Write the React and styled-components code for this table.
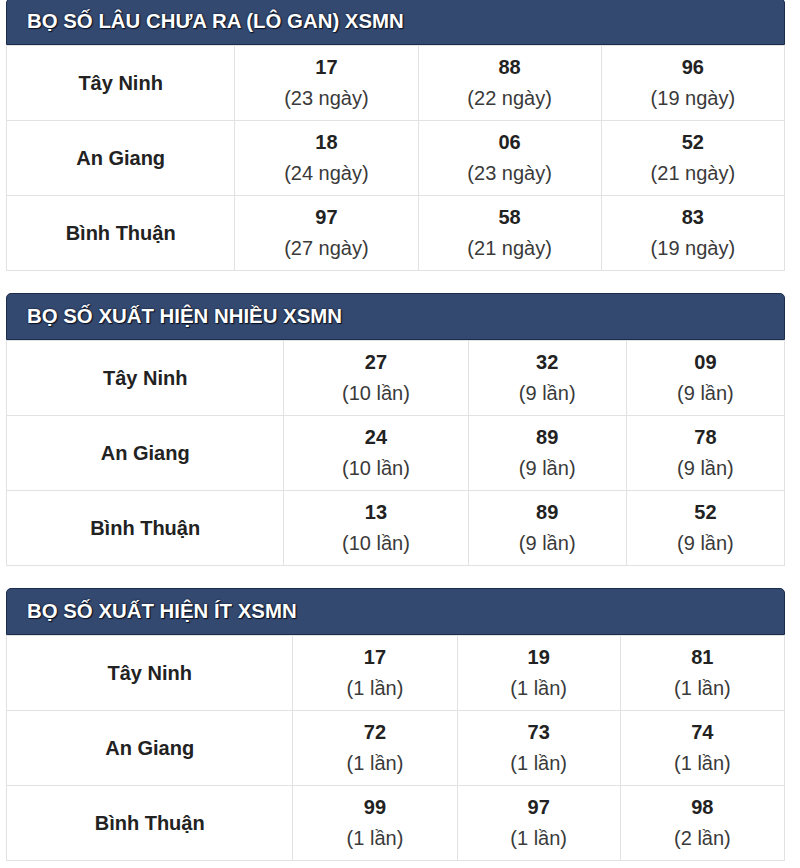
import React from 'react';
import styled, { createGlobalStyle } from 'styled-components';

const GlobalStyle = createGlobalStyle`
  body {
    margin: 0;
    background-color: #ffffff;
    font-family: "Liberation Sans", Arial, Helvetica, sans-serif;
  }
`;

const Wrapper = styled.div`
  width: 779px;
  margin: -2px 0 0 6px;
  display: flex;
  flex-direction: column;
  gap: 22px;
`;

const Section = styled.section`
  display: flex;
  flex-direction: column;
`;

const Header = styled.h2`
  margin: 0;
  height: 45px;
  display: flex;
  align-items: center;
  padding-left: 20px;
  background-color: #344970;
  border: 1px solid #1c2c4c;
  border-radius: 5px 5px 0 0;
  color: #ffffff;
  font-size: 20.4px;
  font-weight: bold;
  text-shadow: 0 0 2px #0b1222, 1px 1px 1px #0b1222;
`;

const Table = styled.table`
  width: 100%;
  border-collapse: collapse;
  table-layout: fixed;
  border: 1px solid #dedede;
  border-top: none;
`;

const Col = styled.col`
  width: ${p => p.$w}px;
`;

const Cell = styled.td`
  border: 1px solid #e2e2e2;
  height: 74px;
  padding: 0;
  text-align: center;
  vertical-align: middle;
  font-size: 20px;
  line-height: 31px;
  color: #333333;
`;

const Province = styled(Cell)`
  font-weight: bold;
  color: #222222;
`;

const Num = styled.div`
  font-weight: bold;
  color: #222222;
`;

const Sub = styled.div`
  color: #3a3a3a;
`;

const provinces = ['Tây Ninh', 'An Giang', 'Bình Thuận'];

const sections = [
  {
    title: 'BỌ SỐ LÂU CHƯA RA (LÔ GAN) XSMN',
    cols: [228, 183, 183, 183],
    unit: 'ngày',
    rows: [
      [['17', 23], ['88', 22], ['96', 19]],
      [['18', 24], ['06', 23], ['52', 21]],
      [['97', 27], ['58', 21], ['83', 19]],
    ],
  },
  {
    title: 'BỌ SỐ XUẤT HIỆN NHIỀU XSMN',
    cols: [277, 184, 158, 158],
    unit: 'lần',
    rows: [
      [['27', 10], ['32', 9], ['09', 9]],
      [['24', 10], ['89', 9], ['78', 9]],
      [['13', 10], ['89', 9], ['52', 9]],
    ],
  },
  {
    title: 'BỌ SỐ XUẤT HIỆN ÍT XSMN',
    cols: [286, 164, 163, 164],
    unit: 'lần',
    rows: [
      [['17', 1], ['19', 1], ['81', 1]],
      [['72', 1], ['73', 1], ['74', 1]],
      [['99', 1], ['97', 1], ['98', 2]],
    ],
  },
];

const App = () => {
  return (
    <>
      <GlobalStyle />
      <Wrapper>
        {sections.map(s => (
          <Section key={s.title}>
            <Header>{s.title}</Header>
            <Table>
              <colgroup>
                {s.cols.map((w, i) => <Col key={i} $w={w} />)}
              </colgroup>
              <tbody>
                {s.rows.map((row, r) => (
                  <tr key={r}>
                    <Province>{provinces[r]}</Province>
                    {row.map(([num, count], c) => (
                      <Cell key={c}>
                        <Num>{num}</Num>
                        <Sub>({count} {s.unit})</Sub>
                      </Cell>
                    ))}
                  </tr>
                ))}
              </tbody>
            </Table>
          </Section>
        ))}
      </Wrapper>
    </>
  );
};

export default App;
